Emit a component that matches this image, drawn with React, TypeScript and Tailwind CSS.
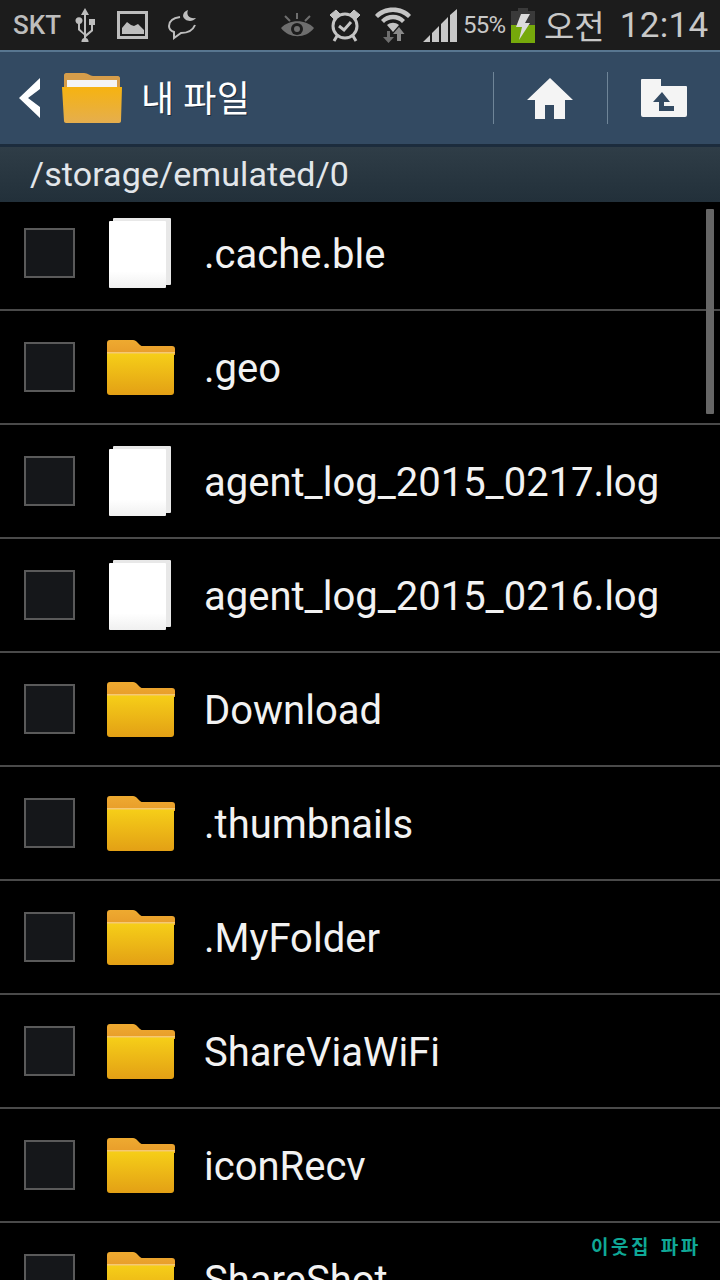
function Folder() {
  return (
    <svg width="68" height="55" viewBox="0 0 68 55" className="shrink-0">
      <defs>
        <linearGradient id="fb" x1="0" y1="0" x2="0" y2="1">
          <stop offset="0" stopColor="#f6cf18" />
          <stop offset="1" stopColor="#e3a015" />
        </linearGradient>
        <linearGradient id="ft" x1="0" y1="0" x2="0" y2="1">
          <stop offset="0" stopColor="#eeaa30" />
          <stop offset="1" stopColor="#e89c2a" />
        </linearGradient>
      </defs>
      <path d="M0 3a3 3 0 0 1 3-3h23c2 0 3 1 4 2l3 3c1 1 2 1 3 1h29a3 3 0 0 1 3 3v6H0z" fill="url(#ft)" />
      <path d="M0 13h67v39a3 3 0 0 1-3 3H3a3 3 0 0 1-3-3z" fill="url(#fb)" />
      <rect x="0" y="12" width="68" height="1.500" fill="#f5c873" />
    </svg>
  );
}

function FileIcon() {
  return (
    <svg width="62" height="70" viewBox="0 0 62 70" className="shrink-0 -ml-[2px]">
      <defs>
        <linearGradient id="fl" x1="0" y1="0" x2="0" y2="1">
          <stop offset="0" stopColor="#ffffff" />
          <stop offset="0.75" stopColor="#ffffff" />
          <stop offset="1" stopColor="#f0f0f0" />
        </linearGradient>
      </defs>
      <rect x="4" y="0" width="58" height="67" rx="1" fill="#e8e8e8" />
      <rect x="0" y="3" width="57" height="67" rx="1" fill="url(#fl)" />
    </svg>
  );
}

const rows = [
  { name: ".cache.ble", file: true },
  { name: ".geo" },
  { name: "agent_log_2015_0217.log", file: true },
  { name: "agent_log_2015_0216.log", file: true },
  { name: "Download" },
  { name: ".thumbnails" },
  { name: ".MyFolder" },
  { name: "ShareViaWiFi" },
  { name: "iconRecv" },
  { name: "ShareShot" },
];

function Row({ name, file }: { name: string; file?: boolean }) {
  return (
    <div className="h-[114px] shrink-0 border-b-2 border-[#4a4a4a] flex items-center pl-6">
      <div className="w-[51px] h-[50px] shrink-0 border-2 border-[#5a5a5a] bg-[#15171a]" />
      <div className="w-[130px] flex justify-center pl-[2px]">
        {file ? <FileIcon /> : <Folder />}
      </div>
      <span className="-ml-[1px] mt-[4px] text-[40px] text-[#f2f2f2] leading-none">{name}</span>
    </div>
  );
}

function StatusBar() {
  return (
    <div className="h-[50px] shrink-0 bg-[#1c1c1c] flex items-center text-[#c8c8c8]">
      <span className="ml-[13px] w-[47px] text-[26px] font-medium text-[#bdbdbd]">SKT</span>
      <svg width="22" height="34" viewBox="0 0 22 34" className="ml-[14px]" fill="#bdbdbd">
        <path d="M11 0l4 7h-3v19l5-4v-5h-2v-6h6v6h-2v6l-7 6v1a3.500 3.500 0 1 1-2 0v-3l-6-5v-6a3.500 3.500 0 1 1 2 0v5l4 4V7H7z" />
      </svg>
      <svg width="32" height="28" viewBox="0 0 32 28" className="ml-[21px]">
        <rect x="1.500" y="1.500" width="28" height="25" fill="none" stroke="#bdbdbd" strokeWidth="3" />
        <path d="M5 23v-6l5-6 4 3 3 1 4-2 6 6v4z" fill="#bdbdbd" />
      </svg>
      <svg width="29" height="30" viewBox="0 0 29 30" className="ml-[19px]" fill="none" stroke="#bdbdbd" strokeWidth="2">
        <path d="M12 7C5 8 1 11 1 16c0 3 2 5 5 6l0 6 7-5c7 0 12-3 14-8" />
        <path d="M20 0c-2 5 1 9 8 8-4 5-12 3-13-2 0-3 2-5 5-6z" fill="#bdbdbd" stroke="none" />
      </svg>
      <svg width="33" height="25" viewBox="0 0 33 25" className="ml-[84px]">
        <path d="M0 15C8 6 25 6 33 15 25 26 8 26 0 15z" fill="#6e6e6e" />
        <circle cx="16" cy="16" r="6" fill="#1c1c1c" />
        <circle cx="16" cy="16" r="3" fill="#6e6e6e" />
        <path d="M16 0v6M4 3l5 5M29 3l-5 5" stroke="#6e6e6e" strokeWidth="2" />
      </svg>
      <svg width="34" height="34" viewBox="0 0 34 34" className="ml-[14px]" fill="none" stroke="#c4c4c4">
        <circle cx="17" cy="18" r="12" strokeWidth="3" />
        <path d="M11 18l5 4 7-8" strokeWidth="3" />
        <path d="M2 7l6-5 4 4-6 5zM32 7l-6-5-4 4 6 5z" fill="#c4c4c4" strokeWidth="1" />
        <path d="M9 28l-3 5M25 28l3 5" strokeWidth="3" />
      </svg>
      <svg width="36" height="36" viewBox="0 0 36 36" className="ml-[13px]">
        <path d="M0 8C8 -2 28 -2 36 8l-3 3C25 3 11 3 3 11z" fill="#c4c4c4" />
        <path d="M6 13c6-7 18-7 24 0l-3 3c-5-5-13-5-18 0z" fill="#c4c4c4" />
        <path d="M12 18c4-3 8-3 12 0l-6 7z" fill="#c4c4c4" />
        <path d="M12 24h3v6h4l-5.500 6L8 30h4z" fill="#6e6e6e" />
        <path d="M24 20l5.500 7H26v7h-4v-7h-4z" fill="#8a8a8a" />
      </svg>
      <svg width="34" height="33" viewBox="0 0 34 33" className="ml-[12px]" fill="#c8c8c8">
        <path d="M0 33l7-7v7zM9 24l7-7v16H9zM18 15l7-7v25h-7zM27 6l7-6v33h-7z" />
      </svg>
      <span className="ml-[6px] w-[43px] text-[24px] text-[#c8c8c8] tracking-[-0.8px]">55%</span>
      <div className="ml-[5px] w-[24px] h-[35px] flex flex-col items-center relative">
        <div className="w-[10px] h-[3px] bg-[#3a3a3a]" />
        <div className="w-[24px] h-[14px] bg-[#3a3a3a]" />
        <div className="w-[24px] h-[18px] bg-[#76a90b]" />
        <svg width="14" height="26" viewBox="0 0 14 26" className="absolute top-[6px] left-[5px]" fill="#dcdcdc">
          <path d="M5 0h9L9 9h5L3 26l3-13H0z" />
        </svg>
      </div>
      <span className="ml-[9px] text-[33px] leading-none text-[#c8c8c8] font-['Noto_Sans_CJK_KR',sans-serif]">오전</span>
      <span className="ml-[15px] text-[35px] leading-none text-[#c8c8c8] tracking-[0.3px]">12:14</span>
    </div>
  );
}

function ActionBar() {
  return (
    <div className="h-[97px] shrink-0 bg-[#334a62] border-t-2 border-t-[#587690] border-b-3 border-b-[#1c2c3d] flex items-center">
      <svg width="22" height="40" viewBox="0 0 22 40" className="ml-[19px]" fill="#ffffff">
        <path d="M21 0v11L9 20l12 9v11L0 20z" />
      </svg>
      <svg width="60" height="50" viewBox="0 0 60 50" className="ml-[21px]">
        <defs>
          <linearGradient id="ab" x1="0" y1="0" x2="0" y2="1">
            <stop offset="0" stopColor="#f6b310" />
            <stop offset="1" stopColor="#e5ae4e" />
          </linearGradient>
        </defs>
        <path d="M2 2c0-1 1-2 2-2h18c4 0 6 3 9 3h25c1 0 2 1 2 2v12H2z" fill="#d69d4a" />
        <rect x="5" y="7" width="50" height="9" fill="#f4f4f4" />
        <path d="M0 14h60l-1 34c0 1-1 2-2 2H4c-1 0-2-1-2-2z" fill="url(#ab)" />
      </svg>
      <span className="ml-[19px] -mt-[5px] text-[36px] tracking-[0.5px] leading-none text-white font-['Noto_Sans_CJK_KR',sans-serif] [text-shadow:1px_1px_0_#1c2c3d]">내 파일</span>
      <div className="ml-auto w-[1px] h-[52px] bg-[#6f8598]" />
      <div className="w-[113px] flex justify-center pr-[1px]">
        <svg width="48" height="41" viewBox="0 0 48 41" fill="#f4f4f4">
          <path d="M24 0l23 22h-8v19H28V27h-9v14H9V22H1z" />
        </svg>
      </div>
      <div className="w-[1px] h-[52px] bg-[#6f8598]" />
      <div className="w-[112px] flex justify-center pr-[1px]">
        <svg width="46" height="38" viewBox="0 0 46 38">
          <path d="M0 1a1 1 0 0 1 1-1h19v7h25a1 1 0 0 1 1 1v28a2 2 0 0 1-2 2H2a2 2 0 0 1-2-2z" fill="#f4f4f4" />
          <path d="M21 13l-9 10h6v9h15v-5H23v-4h6z" fill="#334a62" />
        </svg>
      </div>
    </div>
  );
}

export default function App() {
  return (
    <div className="w-[720px] h-[1280px] bg-black overflow-hidden relative flex flex-col font-['Roboto',sans-serif]">
      <StatusBar />
      <ActionBar />
      <div className="h-[55px] shrink-0 bg-gradient-to-b from-[#2f3d47] to-[#22303a] flex items-center pl-[30px] pb-[2px] z-10">
        <span className="text-[34px] tracking-[0.1px] leading-none text-[#e2e6ea]">/storage/emulated/0</span>
      </div>
      <div className="flex-1 overflow-hidden relative">
        <div className="-mt-[5px]">
          {rows.map((r) => (
            <Row key={r.name} name={r.name} file={r.file} />
          ))}
        </div>
        <div className="absolute top-[7px] right-[6px] w-[8px] h-[205px] bg-[#666666] rounded-[1px]" />
      </div>
      <span className="absolute left-[591px] top-[1235px] text-[19px] leading-[22px] font-bold tracking-[2.5px] [word-spacing:3px] text-[#0fa896] font-['Noto_Sans_CJK_KR',sans-serif]">이웃집 파파</span>
    </div>
  );
}
